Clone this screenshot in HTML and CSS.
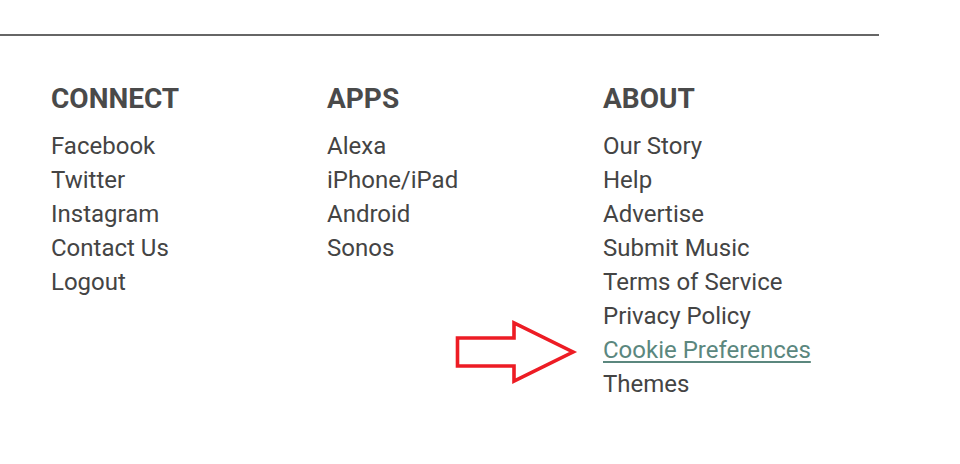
FILE: index.html
```html
<!DOCTYPE html>
<html>
<head>
<meta charset="utf-8">
<link rel="stylesheet" href="styles.css">
</head>
<body>
<footer class="footer">
  <div class="rule"></div>
  <div class="cols">
    <div class="col">
      <h3 class="head">CONNECT</h3>
      <ul class="links">
        <li><a href="#">Facebook</a></li>
        <li><a href="#">Twitter</a></li>
        <li><a href="#">Instagram</a></li>
        <li><a href="#">Contact Us</a></li>
        <li><a href="#">Logout</a></li>
      </ul>
    </div>
    <div class="col">
      <h3 class="head">APPS</h3>
      <ul class="links">
        <li><a href="#">Alexa</a></li>
        <li><a href="#">iPhone/iPad</a></li>
        <li><a href="#">Android</a></li>
        <li><a href="#">Sonos</a></li>
      </ul>
    </div>
    <div class="col">
      <h3 class="head">ABOUT</h3>
      <ul class="links">
        <li><a href="#">Our Story</a></li>
        <li><a href="#">Help</a></li>
        <li><a href="#">Advertise</a></li>
        <li><a href="#">Submit Music</a></li>
        <li><a href="#">Terms of Service</a></li>
        <li><a href="#">Privacy Policy</a></li>
        <li class="marked">
          <svg class="arrow" width="130" height="68" viewBox="0 0 130 68">
            <polygon points="8.5,22 65,22 65,7 124,36 65,65 65,50 8.5,50" fill="none" stroke="#ed1c24" stroke-width="3.6" stroke-linejoin="miter"/>
          </svg>
          <a href="#" class="active">Cookie Preferences</a>
        </li>
        <li><a href="#">Themes</a></li>
      </ul>
    </div>
  </div>
</footer>
</body>
</html>
```
FILE: styles.css
```css
* { box-sizing: border-box; }
html, body { margin: 0; padding: 0; background: #fff; }
body { font-family: Roboto, "Liberation Sans", sans-serif; }
.footer { width: 960px; height: 464px; padding-top: 34px; overflow: hidden; }
.rule { width: 879px; height: 2px; background: #666; }
.cols { display: flex; padding-left: 51px; padding-top: 47px; }
.col { width: 276px; }
.head { margin: 0 0 14px; font-size: 28px; font-weight: 700; color: #4a4a4a; line-height: 32px; }
.links { list-style: none; margin: 0; padding: 0; }
.links li { line-height: 34px; font-size: 24px; }
.links a { color: #444; text-decoration: none; }
.links a.active { color: #5b877e; text-decoration: underline; text-underline-offset: 3px; text-decoration-thickness: 2px; }
.marked { position: relative; }
.arrow { position: absolute; left: -154px; top: -17px; }
```
